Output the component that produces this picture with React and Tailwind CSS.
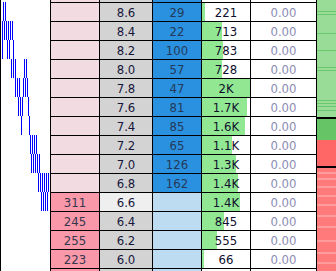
import React from "react";

const rows = [
  { bid: "", price: "8.6", ask: "29", vol: "221", bar: 3, filled: false },
  { bid: "", price: "8.4", ask: "22", vol: "713", bar: 20, filled: false },
  { bid: "", price: "8.2", ask: "100", vol: "783", bar: 21, filled: false },
  { bid: "", price: "8.0", ask: "57", vol: "728", bar: 20, filled: false },
  { bid: "", price: "7.8", ask: "47", vol: "2K", bar: 48, filled: false },
  { bid: "", price: "7.6", ask: "81", vol: "1.7K", bar: 45, filled: false },
  { bid: "", price: "7.4", ask: "85", vol: "1.6K", bar: 43, filled: false },
  { bid: "", price: "7.2", ask: "65", vol: "1.1K", bar: 30, filled: false },
  { bid: "", price: "7.0", ask: "126", vol: "1.3K", bar: 34, filled: false },
  { bid: "", price: "6.8", ask: "162", vol: "1.4K", bar: 36, filled: false },
  { bid: "311", price: "6.6", ask: "", vol: "1.4K", bar: 38, filled: true, cur: true },
  { bid: "245", price: "6.4", ask: "", vol: "845", bar: 22, filled: true },
  { bid: "255", price: "6.2", ask: "", vol: "555", bar: 15, filled: true },
  { bid: "223", price: "6.0", ask: "", vol: "66", bar: 2, filled: true },
  { bid: "", price: "", ask: "", vol: "", bar: 0, filled: true, blank: true },
];

// blue tick lines in the left area, per row (x positions)
const ticks = [
  [3, 5],
  [2, 4, 6, 8, 10, 12],
  [2, 7, 9, 13],
  [11, 13, 15, 24, 26],
  [15, 17, 19, 23, 25, 27],
  [18, 20, 22, 28],
  [21, 29],
  [30, 32, 34, 36],
  [31, 33, 35, 37, 39],
  [38, 40, 42, 44, 46, 48],
  [41, 43, 45, 47],
];

const font = { fontFamily: '"DejaVu Sans Condensed", "Liberation Sans", sans-serif' };

function Histogram() {
  const lines = [];
  ticks.forEach((xs, i) => {
    const top = 2 + 19 * i;
    xs.forEach((x) => {
      lines.push(
        <rect key={`${i}-${x}`} x={x - 1} y={top} width="1" height="19" fill="#0000ff" />
      );
    });
  });
  return (
    <svg width="49" height="271" className="shrink-0 block" shapeRendering="crispEdges">
      {lines}
    </svg>
  );
}

function Strip() {
  const greenLines = [11, 14, 33, 50, 67, 70, 100, 103, 106, 110];
  const redLines = [172, 178, 186, 195, 204, 215, 226, 240, 252, 262];
  return (
    <svg width="19" height="271" className="shrink-0 block" shapeRendering="crispEdges">
      <rect x="0" y="0" width="19" height="117" fill="#98dc98" />
      {greenLines.map((y) => (
        <rect key={y} x="0" y={y} width="19" height="1" fill="#6cc86c" />
      ))}
      <rect x="0" y="117" width="19" height="2" fill="#000" />
      <rect x="0" y="119" width="19" height="21" fill="#66c466" />
      <rect x="0" y="140" width="19" height="26" fill="#ff6666" />
      <rect x="0" y="166" width="19" height="2" fill="#000" />
      <rect x="0" y="168" width="19" height="103" fill="#ff7a7a" />
      {redLines.map((y) => (
        <rect key={y} x="0" y={y} width="19" height="2" fill="#ff9c9c" />
      ))}
    </svg>
  );
}

function Row({ r }) {
  return (
    <div className="flex gap-px h-[18px] shrink-0">
      <div
        className={`w-[48px] flex items-center justify-center text-[#36364f] ${
          r.filled ? "bg-[#f898a8]" : "bg-[#f2dce2]"
        }`}
      >
        {r.bid}
      </div>
      <div
        className={`w-[52px] flex items-center justify-center text-[#16163a] ${
          r.cur ? "bg-[#efefef]" : "bg-[#d3d3d3]"
        }`}
      >
        {r.price}
      </div>
      <div
        className={`w-[48px] flex items-center justify-center text-[#243a58] ${
          r.ask ? "bg-[#2a90e0]" : "bg-[#bddcf2]"
        }`}
      >
        {r.ask}
      </div>
      <div className="w-[48px] relative bg-white flex items-center justify-center text-[#10102e]">
        <div
          className="absolute left-0 top-0 bottom-0 bg-[#92e892]"
          style={{ width: r.bar }}
        />
        <span className="relative">{r.vol}</span>
      </div>
      <div className="w-[65px] bg-white flex items-center justify-center text-[#8c8cb4]">
        {r.blank ? "" : "0.00"}
      </div>
    </div>
  );
}

export default function App() {
  return (
    <div
      className="flex w-[336px] h-[271px] overflow-hidden bg-white text-[13px] leading-none"
      style={font}
    >
      <div className="w-px bg-black shrink-0" />
      <Histogram />
      <div className="w-px bg-black shrink-0" />
      <div className="w-[265px] shrink-0 flex flex-col gap-px bg-black">
        <div className="flex gap-px h-[2px] shrink-0">
          <div className="w-[48px] bg-[#f2dce2]" />
          <div className="w-[52px] bg-[#d3d3d3]" />
          <div className="w-[48px] bg-[#2a90e0]" />
          <div className="w-[48px] bg-white" />
          <div className="w-[65px] bg-white" />
        </div>
        {rows.map((r, i) => (
          <Row key={i} r={r} />
        ))}
      </div>
      <div className="w-px bg-black shrink-0" />
      <Strip />
    </div>
  );
}
